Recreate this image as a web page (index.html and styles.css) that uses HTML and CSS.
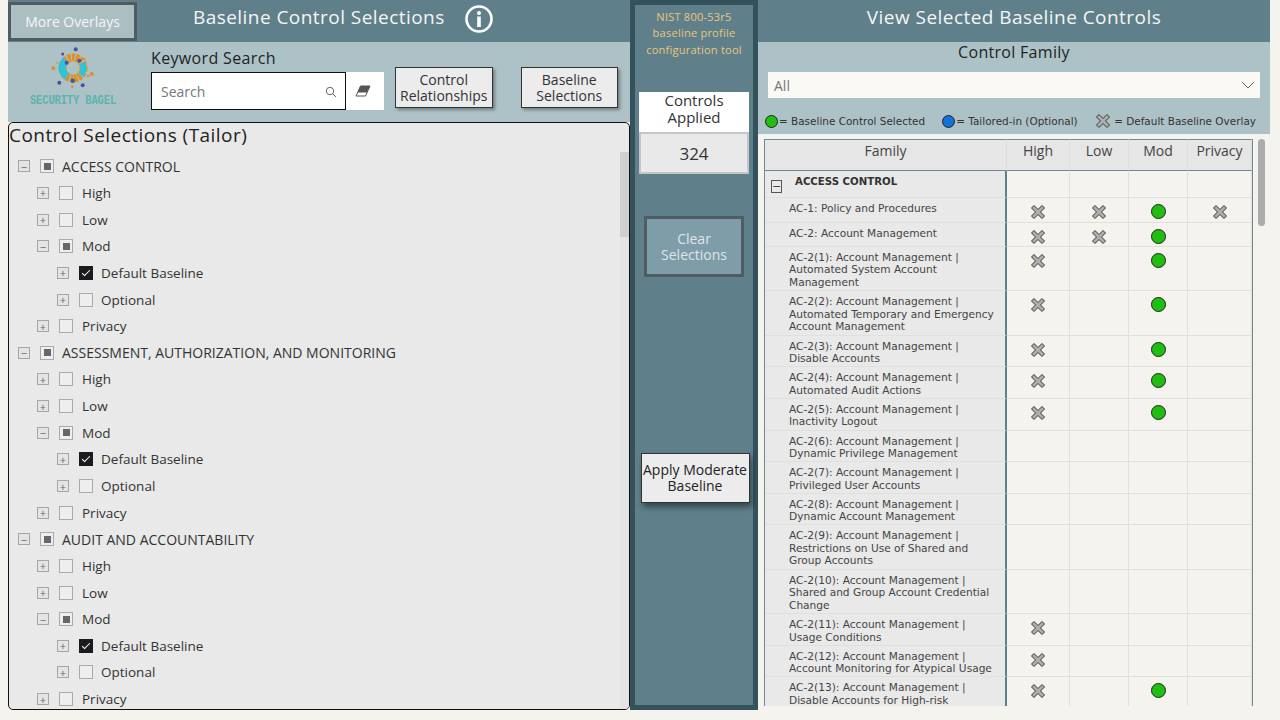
FILE: index.html
```html
<!DOCTYPE html>
<html lang="en">
<head>
    <meta charset="UTF-8">
    <meta name="viewport" content="width=device-width, initial-scale=1.0">
    <title>Baseline Control Selections</title>
    <link rel="stylesheet" href="styles.css">
</head>
<body>
    <svg class="defs" width="0" height="0">
        <symbol id="x-mark" viewBox="0 0 16 16">
            <path d="M1.5 4 4 1.5 8 5.5 12 1.5 14.5 4 10.5 8 14.5 12 12 14.5 8 10.5 4 14.5 1.5 12 5.5 8Z" fill="#aeaeae" stroke="#3a3a3a" stroke-width="1" stroke-linejoin="round"/>
        </symbol>
    </svg>

    <div class="page">
        <!-- left side -->
        <section class="left">
            <div class="bar">
                <button class="overlays">More Overlays</button>
                <h1 class="bar-title">Baseline Control Selections</h1>
                <svg class="info" width="30" height="30" viewBox="0 0 30 30">
                    <circle cx="15" cy="15" r="12.5" fill="none" stroke="#fff" stroke-width="2.6"/>
                    <circle cx="15" cy="9" r="2" fill="#fff"/>
                    <rect x="13.2" y="12.5" width="3.6" height="10.5" fill="#fff"/>
                </svg>
            </div>

            <div class="tools">
                <div class="logo">
                    <svg width="46" height="46" viewBox="0 0 46 46">
                        <circle cx="23" cy="23" r="10.5" fill="none" stroke="#e08f22" stroke-width="8" stroke-dasharray="3 1"/>
                        <path d="M15.5 15A10.5 10.5 0 0 0 17 31.5" fill="none" stroke="#2cc4dc" stroke-width="7"/>
                        <path d="M32 18A10.5 10.5 0 0 1 31 30" fill="none" stroke="#2cc4dc" stroke-width="6"/>
                        <g fill="#4a4fa8">
                            <circle cx="25.7" cy="4.3" r="2"/><circle cx="12.7" cy="9" r="1.5"/><circle cx="16.7" cy="17.7" r="2"/>
                            <circle cx="29.3" cy="15.7" r="2"/><circle cx="9.3" cy="37.7" r="2"/><circle cx="22.7" cy="35.7" r="2.2"/><circle cx="32.7" cy="40.3" r="2"/>
                        </g>
                        <g fill="#e08f22">
                            <circle cx="3.3" cy="23.3" r="2"/><circle cx="41.7" cy="29" r="2"/><circle cx="38" cy="31" r="1.2"/><circle cx="22.3" cy="41.7" r="1.2"/><circle cx="34.3" cy="14" r="1.2"/><circle cx="7.3" cy="17.7" r="1"/>
                        </g>
                    </svg>
                    <span class="logo-name">SECURITY BAGEL</span>
                </div>
                <div class="search">
                    <label class="search-label">Keyword Search</label>
                    <div class="search-row">
                        <div class="search-box">
                            <span>Search</span>
                            <svg width="12" height="12" viewBox="0 0 12 12">
                                <circle cx="5" cy="5" r="3.7" fill="none" stroke="#666" stroke-width="1"/>
                                <path d="M7.8 7.8 11 11" stroke="#666" stroke-width="1"/>
                            </svg>
                        </div>
                        <div class="eraser">
                            <svg width="16" height="12" viewBox="0 0 16 12">
                                <path d="M5.5 1H15L10.5 11H1Z" fill="#fff" stroke="#555"/>
                                <path d="M5.5 1H15L12 7.5H2.5Z" fill="#555"/>
                            </svg>
                        </div>
                    </div>
                </div>
                <button class="tool-btn btn-rel">Control<br>Relationships</button>
                <button class="tool-btn btn-base">Baseline<br>Selections</button>
            </div>

            <div class="tree-panel">
                <h2 class="tree-title">Control Selections (Tailor)</h2>
                <div class="tree-track"><div class="tree-thumb"></div></div>
                <div class="tree">
                    <div class="row lvl0"><i class="exp">&minus;</i><i class="chk part"></i>ACCESS CONTROL</div>
                    <div class="row lvl1"><i class="exp">+</i><i class="chk"></i>High</div>
                    <div class="row lvl1"><i class="exp">+</i><i class="chk"></i>Low</div>
                    <div class="row lvl1"><i class="exp">&minus;</i><i class="chk part"></i>Mod</div>
                    <div class="row lvl2"><i class="exp">+</i><i class="chk on"></i>Default Baseline</div>
                    <div class="row lvl2"><i class="exp">+</i><i class="chk"></i>Optional</div>
                    <div class="row lvl1"><i class="exp">+</i><i class="chk"></i>Privacy</div>

                    <div class="row lvl0"><i class="exp">&minus;</i><i class="chk part"></i>ASSESSMENT, AUTHORIZATION, AND MONITORING</div>
                    <div class="row lvl1"><i class="exp">+</i><i class="chk"></i>High</div>
                    <div class="row lvl1"><i class="exp">+</i><i class="chk"></i>Low</div>
                    <div class="row lvl1"><i class="exp">&minus;</i><i class="chk part"></i>Mod</div>
                    <div class="row lvl2"><i class="exp">+</i><i class="chk on"></i>Default Baseline</div>
                    <div class="row lvl2"><i class="exp">+</i><i class="chk"></i>Optional</div>
                    <div class="row lvl1"><i class="exp">+</i><i class="chk"></i>Privacy</div>

                    <div class="row lvl0"><i class="exp">&minus;</i><i class="chk part"></i>AUDIT AND ACCOUNTABILITY</div>
                    <div class="row lvl1"><i class="exp">+</i><i class="chk"></i>High</div>
                    <div class="row lvl1"><i class="exp">+</i><i class="chk"></i>Low</div>
                    <div class="row lvl1"><i class="exp">&minus;</i><i class="chk part"></i>Mod</div>
                    <div class="row lvl2"><i class="exp">+</i><i class="chk on"></i>Default Baseline</div>
                    <div class="row lvl2"><i class="exp">+</i><i class="chk"></i>Optional</div>
                    <div class="row lvl1"><i class="exp">+</i><i class="chk"></i>Privacy</div>
                </div>
            </div>
        </section>

        <!-- middle strip -->
        <section class="middle">
            <p class="tool-name">NIST 800-53r5<br>baseline profile<br>configuration tool</p>
            <div class="counter">
                <div class="counter-label">Controls<br>Applied</div>
                <div class="counter-value">324</div>
            </div>
            <button class="clear">Clear<br>Selections</button>
            <button class="apply">Apply Moderate<br>Baseline</button>
        </section>

        <!-- right side -->
        <section class="right">
            <div class="bar bar-right">
                <h1 class="bar-title">View Selected Baseline Controls</h1>
            </div>
            <div class="filters">
                <div class="filter-label">Control Family</div>
                <div class="dropdown">
                    <span>All</span>
                    <svg width="14" height="8" viewBox="0 0 14 8"><path d="M1 1 7 7 13 1" fill="none" stroke="#666"/></svg>
                </div>
                <div class="legend">
                    <span class="legend-item"><i class="dot"></i>= Baseline Control Selected</span>
                    <span class="legend-item"><i class="dot blue"></i>= Tailored-in (Optional)</span>
                    <span class="legend-item"><svg class="xm" width="14" height="14"><use href="#x-mark"/></svg>&nbsp;= Default Baseline Overlay</span>
                </div>
            </div>
            <div class="table-wrap">
                <div class="table-clip">
                    <table class="controls">
                        <colgroup><col class="c-fam"><col class="c-high"><col class="c-low"><col class="c-mod"><col class="c-priv"></colgroup>
                        <thead><tr><th>Family</th><th>High</th><th>Low</th><th>Mod</th><th>Privacy</th></tr></thead>
                        <tbody>
                            <tr class="h26"><td class="fam group"><i class="exp big">&minus;</i><b>ACCESS CONTROL</b></td><td></td><td></td><td></td><td></td></tr>
                            <tr class="h25"><td class="fam">AC-1: Policy and Procedures</td><td><svg class="xm"><use href="#x-mark"/></svg></td><td><svg class="xm"><use href="#x-mark"/></svg></td><td><i class="dot"></i></td><td><svg class="xm"><use href="#x-mark"/></svg></td></tr>
                            <tr class="h25"><td class="fam">AC-2: Account Management</td><td><svg class="xm"><use href="#x-mark"/></svg></td><td><svg class="xm"><use href="#x-mark"/></svg></td><td><i class="dot"></i></td><td></td></tr>
                            <tr class="h44"><td class="fam">AC-2(1): Account Management | Automated System Account Management</td><td><svg class="xm"><use href="#x-mark"/></svg></td><td></td><td><i class="dot"></i></td><td></td></tr>
                            <tr class="h44"><td class="fam">AC-2(2): Account Management | Automated Temporary and Emergency Account Management</td><td><svg class="xm"><use href="#x-mark"/></svg></td><td></td><td><i class="dot"></i></td><td></td></tr>
                            <tr class="h32"><td class="fam">AC-2(3): Account Management | Disable Accounts</td><td><svg class="xm"><use href="#x-mark"/></svg></td><td></td><td><i class="dot"></i></td><td></td></tr>
                            <tr class="h32"><td class="fam">AC-2(4): Account Management | Automated Audit Actions</td><td><svg class="xm"><use href="#x-mark"/></svg></td><td></td><td><i class="dot"></i></td><td></td></tr>
                            <tr class="h32"><td class="fam">AC-2(5): Account Management | Inactivity Logout</td><td><svg class="xm"><use href="#x-mark"/></svg></td><td></td><td><i class="dot"></i></td><td></td></tr>
                            <tr class="h32"><td class="fam">AC-2(6): Account Management | Dynamic Privilege Management</td><td></td><td></td><td></td><td></td></tr>
                            <tr class="h32"><td class="fam">AC-2(7): Account Management | Privileged User Accounts</td><td></td><td></td><td></td><td></td></tr>
                            <tr class="h32"><td class="fam">AC-2(8): Account Management | Dynamic Account Management</td><td></td><td></td><td></td><td></td></tr>
                            <tr class="h44"><td class="fam">AC-2(9): Account Management | Restrictions on Use of Shared and Group Accounts</td><td></td><td></td><td></td><td></td></tr>
                            <tr class="h44"><td class="fam">AC-2(10): Account Management | Shared and Group Account Credential Change</td><td></td><td></td><td></td><td></td></tr>
                            <tr class="h32"><td class="fam">AC-2(11): Account Management | Usage Conditions</td><td><svg class="xm"><use href="#x-mark"/></svg></td><td></td><td></td><td></td></tr>
                            <tr class="h32"><td class="fam">AC-2(12): Account Management | Account Monitoring for Atypical Usage</td><td><svg class="xm"><use href="#x-mark"/></svg></td><td></td><td></td><td></td></tr>
                            <tr class="h32"><td class="fam">AC-2(13): Account Management | Disable Accounts for High-risk Individuals</td><td><svg class="xm"><use href="#x-mark"/></svg></td><td></td><td><i class="dot"></i></td><td></td></tr>
                        </tbody>
                    </table>
                </div>
                <div class="table-scroll"></div>
            </div>
        </section>
    </div>
</body>
</html>
```

FILE: styles.css
```css
html, body {
    margin: 0;
    padding: 0;
    height: 720px;
    overflow: hidden;
    background-color: #f5f3ee;
}
body {
    font-family: "Open Sans", "Noto Sans", sans-serif;
    color: #222;
}
.defs {
    display: block;
    height: 0;
}
.page {
    display: flex;
    width: 1270px;
    height: 710px;
    padding-left: 8px;
    box-sizing: content-box;
}
button {
    font-family: inherit;
    cursor: pointer;
}

/* header bars */
.bar {
    display: flex;
    align-items: center;
    height: 42px;
    background-color: #5f7f8a;
    box-sizing: border-box;
}
.bar-title {
    margin: 0;
    font-size: 19px;
    font-weight: 400;
    letter-spacing: 0.45px;
    color: #f4f6f6;
    padding-bottom: 9px;
}
.left {
    display: flex;
    flex-direction: column;
    width: 622px;
}
.overlays {
    flex-shrink: 0;
    width: 129px;
    height: 39px;
    margin: 1px 0 0 0;
    background-color: #abbfc3;
    border: 3px solid #4f5d60;
    color: #f3f6f6;
    font-size: 14px;
    padding: 0;
}
.left .bar-title {
    margin-left: 56px;
}
.info {
    margin: 0 0 4px 19px;
}

/* search row */
.tools {
    display: flex;
    height: 80px;
    background-color: #adc2c6;
}
.logo {
    flex-shrink: 0;
    width: 130px;
    margin-right: 13px;
    display: flex;
    flex-direction: column;
    align-items: center;
    padding-top: 3px;
    box-sizing: border-box;
}
.logo-name {
    font-family: "Liberation Mono", monospace;
    font-weight: 700;
    font-size: 10.5px;
    letter-spacing: -0.15px;
    color: #5db3ad;
    margin-top: 3px;
    transform: scaleY(1.3);
}
.search-label {
    display: block;
    font-size: 16px;
    letter-spacing: 0.35px;
    margin-top: 5px;
    line-height: 23px;
}
.search-row {
    display: flex;
    margin-top: 2px;
}
.search-box {
    display: flex;
    align-items: center;
    justify-content: space-between;
    width: 195px;
    height: 38px;
    padding: 1px 8px 0 9px;
    background-color: #fff;
    border: 1px solid #111;
    box-sizing: border-box;
    font-size: 14px;
    color: #777;
}
.eraser {
    display: flex;
    align-items: center;
    justify-content: center;
    width: 38px;
    height: 38px;
    padding-right: 5px;
    box-sizing: border-box;
    background-color: #fff;
}
.tool-btn {
    flex-shrink: 0;
    width: 97.5px;
    height: 41px;
    margin-top: 25px;
    padding: 0;
    background-color: #ececec;
    border: 1px solid #333;
    box-shadow: 2px 2px 3px rgba(0, 0, 0, 0.35);
    font-size: 14px;
    line-height: 16px;
    color: #333;
}
.btn-rel {
    margin-left: 11px;
}
.btn-base {
    margin-left: 28px;
}

/* tree */
.tree-panel {
    position: relative;
    flex: 1;
    background-color: #e9e9e9;
    border: 1px solid #111;
    border-radius: 5px;
    overflow: hidden;
    box-sizing: border-box;
    height: 587px;
}
.tree-title {
    margin: 0;
    font-size: 19px;
    font-weight: 400;
    line-height: 24px;
    letter-spacing: 0.45px;
}
.tree-track {
    position: absolute;
    right: 0;
    top: 29px;
    bottom: 0;
    width: 9px;
    background-color: #e3e3e3;
}
.tree-thumb {
    height: 85px;
    background-color: #cfcfcf;
}
.tree {
    padding-top: 6px;
}
.row {
    display: flex;
    align-items: center;
    height: 26.65px;
    font-size: 13.5px;
    color: #333;
}
.lvl0 {
    padding-left: 9px;
    font-size: 14px;
}
.lvl1 { padding-left: 28px; }
.lvl1 .chk { margin-right: 9px; }
.lvl2 { padding-left: 48px; }
.exp {
    display: inline-flex;
    align-items: center;
    justify-content: center;
    width: 10px;
    height: 10px;
    border: 1px solid #a5a5a5;
    background-color: #e4e4e4;
    font-style: normal;
    font-size: 11px;
    line-height: 1;
    color: #666;
    margin-right: 10px;
    box-sizing: content-box;
}
.chk {
    display: inline-flex;
    align-items: center;
    justify-content: center;
    width: 12px;
    height: 12px;
    border: 1px solid #aaa;
    margin-right: 8px;
    background-color: #eee;
    position: relative;
}
.chk.part::after {
    content: "";
    width: 7px;
    height: 7px;
    background-color: #666;
}
.chk.on {
    background-color: #1a1a1f;
    border-color: #1a1a1f;
}
.chk.on::after {
    content: "";
    width: 7px;
    height: 3px;
    border-left: 1.5px solid #fff;
    border-bottom: 1.5px solid #fff;
    transform: rotate(-45deg);
    margin-top: -2px;
}

/* middle strip */
.middle {
    display: flex;
    flex-direction: column;
    align-items: center;
    width: 128px;
    height: 710px;
    background-color: #5f7f8a;
    border: 5px solid #33525c;
    box-sizing: border-box;
}
.tool-name {
    margin: 4px 0 0;
    text-align: center;
    font-size: 11.1px;
    line-height: 16.4px;
    color: #e8c77e;
    letter-spacing: 0.2px;
}
.counter {
    width: 110px;
    margin-top: 34px;
}
.counter-label {
    background-color: #fff;
    height: 40px;
    text-align: center;
    font-size: 15px;
    line-height: 17px;
    box-sizing: border-box;
    color: #333;
}
.counter-value {
    height: 42px;
    line-height: 40px;
    text-align: center;
    background-color: #e9e9e9;
    border: 2px solid #c6c6c6;
    box-sizing: border-box;
    font-size: 17px;
    color: #333;
}
.clear {
    width: 100px;
    height: 61px;
    margin-top: 42px;
    background-color: #7f9da8;
    border: 3px solid #4f5d60;
    color: #dde5e8;
    font-size: 14px;
    line-height: 16px;
    padding: 0;
}
.apply {
    width: 109px;
    height: 50px;
    margin: 176px 0 0 2px;
    background-color: #ececec;
    border: 1px solid #333;
    box-shadow: 2px 4px 6px rgba(0, 0, 0, 0.45);
    font-size: 14px;
    line-height: 16px;
    color: #222;
    padding: 0;
}

/* right side */
.right {
    display: flex;
    flex-direction: column;
    width: 512px;
}
.bar-right {
    justify-content: center;
}
.filters {
    height: 92px;
    background-color: #adc2c6;
    overflow: hidden;
}
.filter-label {
    text-align: center;
    font-size: 16px;
    line-height: 20px;
    letter-spacing: 0.3px;
    color: #222;
}
.dropdown {
    display: flex;
    align-items: center;
    justify-content: space-between;
    height: 26px;
    margin: 10px 10px 0;
    padding: 0 5px 0 6px;
    background-color: #faf9f6;
    font-size: 14px;
    color: #777;
}
.legend {
    display: flex;
    justify-content: space-between;
    align-items: center;
    margin: 15px 14px 0 7px;
    font-family: "DejaVu Sans", sans-serif;
    font-size: 10.4px;
    letter-spacing: 0.03px;
    color: #333;
    height: 16px;
}
.legend-item {
    display: inline-flex;
    align-items: center;
}
.dot {
    display: inline-block;
    width: 13px;
    height: 13px;
    border-radius: 50%;
    background-color: #1fbf12;
    border: 1px solid #222;
    box-sizing: border-box;
}
.dot.blue {
    background-color: #1573d8;
}
.legend .dot {
    margin-right: 1px;
}

/* table */
.table-wrap {
    display: flex;
    height: 572px;
    padding: 5px 0 0 6px;
    box-sizing: border-box;
    overflow: hidden;
}
.table-clip {
    width: 489px;
    height: 567px;
    overflow: hidden;
}
.controls {
    table-layout: fixed;
    width: 489px;
    border-collapse: separate;
    border-spacing: 0;
    font-family: "DejaVu Sans", sans-serif;
    font-size: 10.6px;
    color: #444;
    border-left: 1px solid #6b8a93;
    border-right: 1px solid #6b8a93;
    box-sizing: border-box;
}
.c-fam { width: 242px; }
.c-high { width: 63px; }
.c-low { width: 59px; }
.c-mod { width: 59px; }
.c-priv { width: 64px; }
.controls th {
    height: 32px;
    background-color: #e6e6e6;
    border-top: 1px solid #6b8a93;
    border-bottom: 1px solid #6b8a93;
    border-right: 1px solid #dcdcdc;
    font-size: 14px;
    font-weight: 400;
    font-family: "Open Sans", sans-serif;
    color: #444;
    padding: 0 0 8px;
    box-sizing: border-box;
    line-height: 18px;
}
.controls td {
    border-bottom: 1px solid #e2e0da;
    border-right: 1px solid #e2e0da;
    text-align: center;
    vertical-align: top;
    padding: 6px 0 0;
    box-sizing: border-box;
}
.controls td.fam {
    text-align: left;
    background-color: #e9e9e9;
    border-right: 2px solid #5f7f8a;
    padding: 4px 8px 0 24px;
    line-height: 12.4px;
    white-space: normal;
}
.controls td.group {
    padding: 5px 0 0 6px;
    color: #333;
}
.group b {
    position: relative;
    top: -5px;
    font-size: 10.2px;
}
.exp.big {
    width: 9px;
    height: 11px;
    margin: 4px 13px 0 0;
    background-color: transparent;
    border-color: #555;
    color: #444;
}
.h25 { height: 24.5px; }
.h26 { height: 27px; }
.h32 { height: 31.6px; }
.h44 { height: 44.4px; }
.xm {
    display: inline-block;
    width: 16px;
    height: 16px;
}
.controls .xm {
    display: block;
    margin: 0 auto;
}
.controls .dot {
    display: block;
    width: 15px;
    height: 15px;
    margin: 0 auto;
}
.table-scroll {
    width: 7px;
    height: 87px;
    margin-left: 5px;
    border-radius: 4px;
    background-color: #ababab;
}
```
